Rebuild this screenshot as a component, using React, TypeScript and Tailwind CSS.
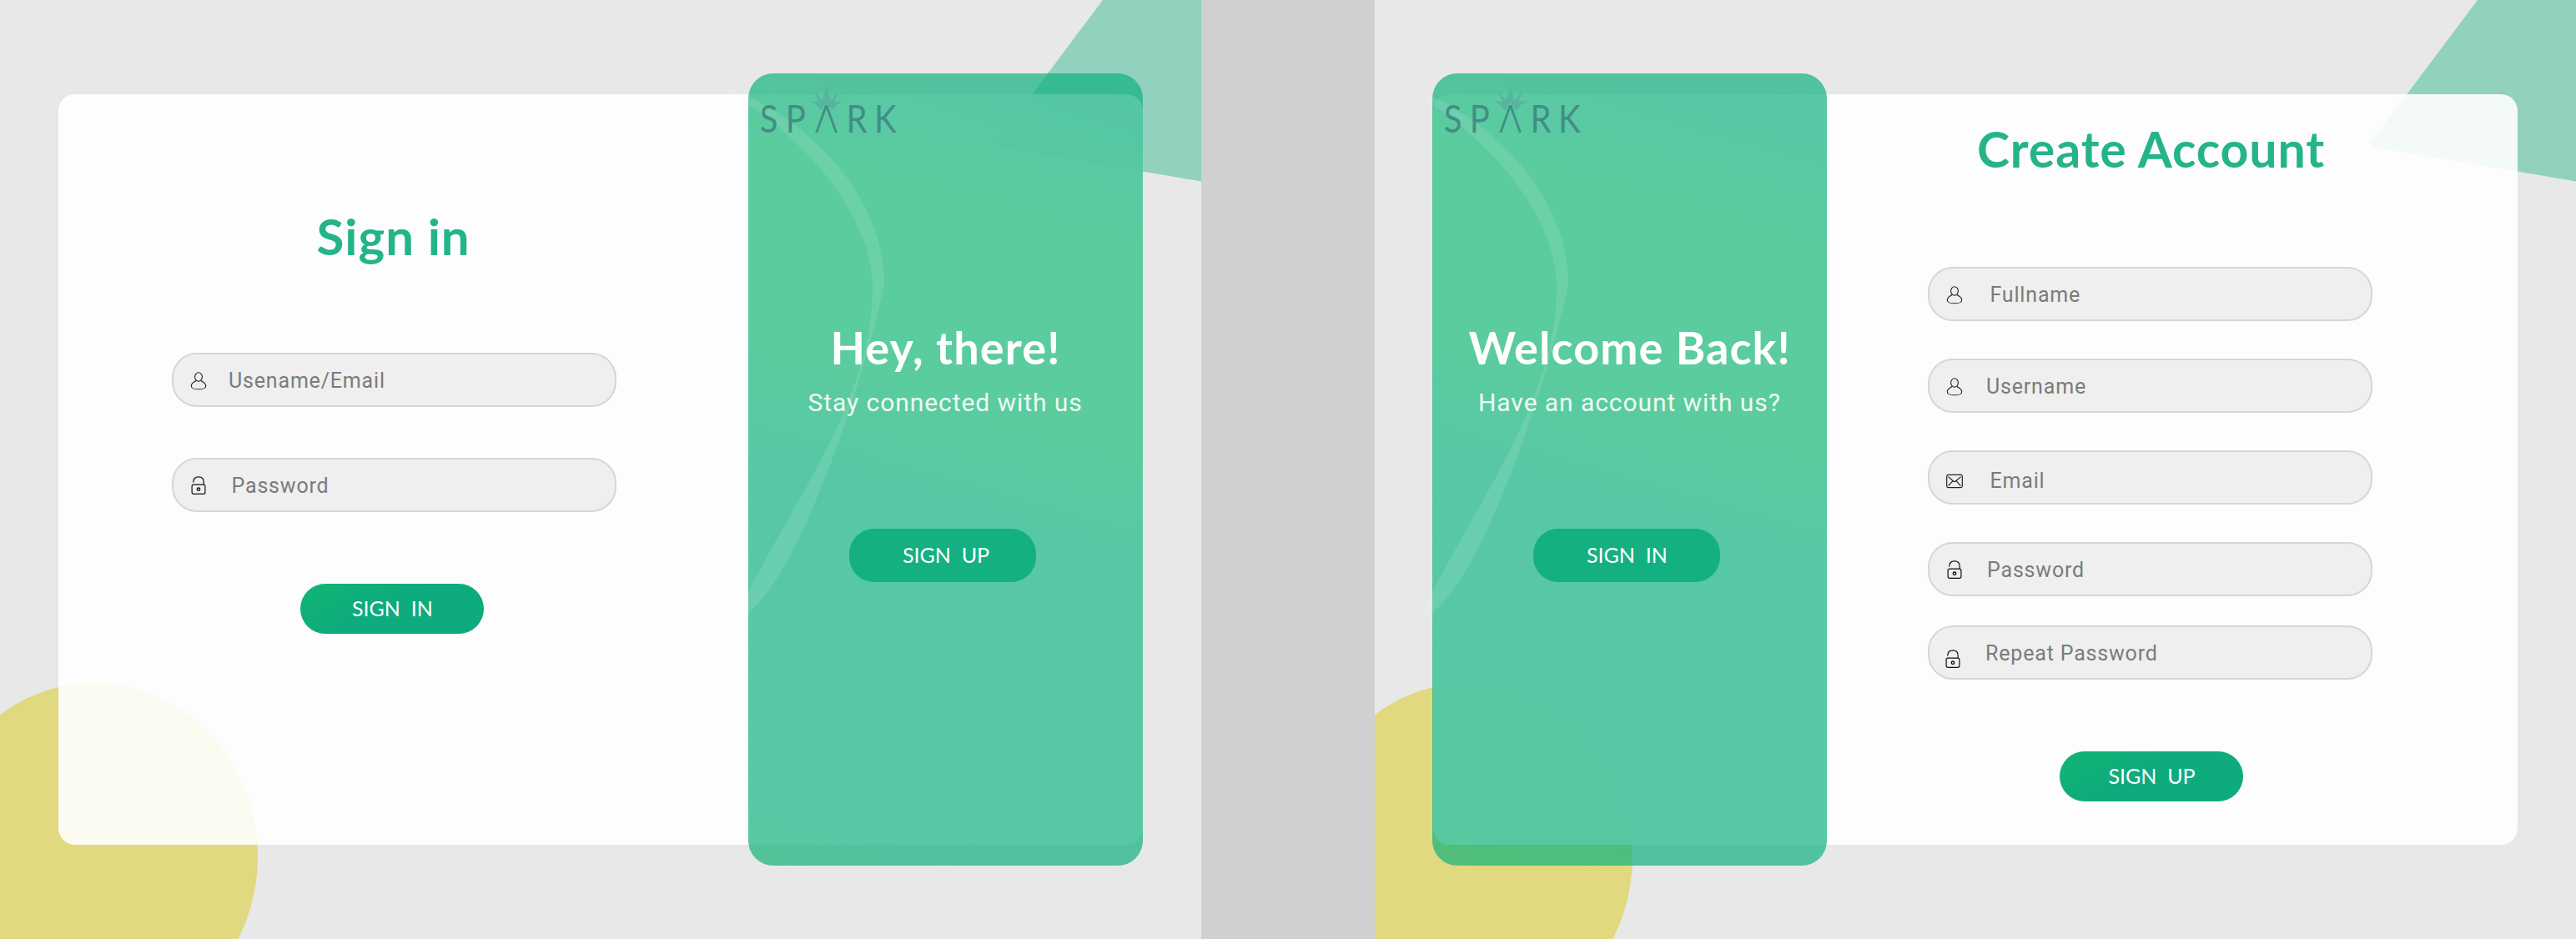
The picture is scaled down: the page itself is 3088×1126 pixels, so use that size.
import React from "react";

type IconName = "user" | "lock" | "mail";

function FieldIcon({ name }: { name: IconName }) {
  if (name === "user") {
    return (
      <svg width="20" height="22" viewBox="0 0 20 22" fill="none" stroke="#222" strokeWidth="1.1">
        <ellipse cx="10" cy="6" rx="4.4" ry="5.2" />
        <path d="M7.2 10.6 C4 12.2 1.3 13.6 1.3 16.6 C1.3 19.8 3.6 20.8 10 20.8 C16.4 20.8 18.7 19.8 18.7 16.6 C18.7 13.6 16 12.2 12.8 10.6" />
      </svg>
    );
  }
  if (name === "lock") {
    return (
      <svg width="20" height="22" viewBox="0 0 20 22" fill="none" stroke="#111" strokeWidth="1.2">
        <rect x="2.1" y="10.1" width="15.8" height="11.2" rx="2" />
        <path d="M3.7 7.4 C3.7 3.2 6.2 0.9 10 0.9 C13.8 0.9 16.2 3.2 16.2 7.2 V10" />
        <circle cx="10" cy="15.7" r="1.7" strokeWidth="1.4" />
      </svg>
    );
  }
  return (
    <svg width="20" height="22" viewBox="0 0 20 22" fill="none" stroke="#222" strokeWidth="1.2">
      <rect x="0.7" y="3.4" width="18.6" height="15.2" rx="1.8" />
      <path d="M2.4 5.6 L8.6 11 Q10 12.2 11.4 11 L17.6 5.6 M2.6 16.6 L7.8 10.8 M17.4 16.6 L12.2 10.8" />
    </svg>
  );
}

interface FieldProps {
  icon: IconName;
  label: string;
  className?: string;
  iconClass?: string;
  labelClass?: string;
}

function Field({ icon, label, className = "", iconClass = "", labelClass = "" }: FieldProps) {
  return (
    <div
      className={`flex h-[65px] w-[533px] items-center rounded-[30px] border-2 border-[#d6d6d6] bg-[#efefef] pl-5 ${className}`}
    >
      <span className={iconClass}>
        <FieldIcon name={icon} />
      </span>
      <span
        className={`font-[Roboto,sans-serif] text-[25px] leading-[30px] tracking-[0.82px] text-[#7b7b7b] ${labelClass}`}
      >
        {label}
      </span>
    </div>
  );
}

function SubmitButton({ children, className = "" }: { children: string; className?: string }) {
  return (
    <button
      className={`flex h-[60px] w-[220px] items-center whitespace-pre rounded-[30px] bg-[linear-gradient(150deg,#12b572_0%,#0dab7d_45%,#0dab7d_100%)] font-[Lato,sans-serif] text-[25px] text-white ${className}`}
    >
      {children}
    </button>
  );
}

function SparkLogo() {
  return (
    <svg className="absolute left-0 top-0" width="200" height="90" viewBox="0 0 200 90" role="img" fill="#438d87">
      <path
        d="M93.7 16 L98.9 32.5 L108.7 21 L103 34.5 L113.7 32.7 L107.5 36.6 L100.5 44 L93.7 35.5 L87 44 L80 36.6 L74.4 32.7 L84.6 34.5 L78.7 21 L88.6 32.5 Z"
        fill="#58b39f"
      />
      <text
        transform="scale(0.88 1)"
        x="15.5 51"
        y="71.3"
        fontFamily="Lato, sans-serif"
        fontSize="45.5"
      >
        SP
      </text>
      <text x="93.7" y="71.3" textAnchor="middle" fontFamily="Roboto, sans-serif" fontWeight="300" fontSize="46">
        Λ
      </text>
      <text
        transform="scale(0.88 1)"
        x="133.5 171.5"
        y="71.3"
        fontFamily="Lato, sans-serif"
        fontSize="45.5"
      >
        RK
      </text>
    </svg>
  );
}

function Swoosh() {
  return (
    <svg
      className="absolute left-0 top-0 overflow-visible"
      width="473"
      height="950"
      viewBox="0 0 473 950"
      fill="white"
      fillOpacity="0.11"
    >
      <path d="M-27 17 C64 48 163 142 163 253 C145 345 60 620 -10 653 Q-14 654 -11 646 C40 530 149 400 149 257 C149 175 75 80 -27 20 Z" />
    </svg>
  );
}

interface PanelProps {
  title: string;
  titleClass: string;
  subtitle: string;
  subtitleClass: string;
  action: string;
  className?: string;
}

function GreenPanel({ title, titleClass, subtitle, subtitleClass, action, className = "" }: PanelProps) {
  return (
    <section
      className={`relative -my-[25px] flex w-[473px] shrink-0 flex-col items-start rounded-[30px] bg-[linear-gradient(196deg,rgba(17,177,129,0.7)_0%,rgba(17,177,129,0.7)_6%,rgba(21,183,117,0.7)_20%,rgba(21,183,117,0.7)_42%,rgba(17,177,129,0.7)_55%,rgba(17,177,129,0.7)_93%,rgba(19,180,118,0.7)_100%)] ${className}`}
    >
      <Swoosh />
      <SparkLogo />
      <h2
        className={`relative mt-[302px] whitespace-nowrap font-[Lato,sans-serif] text-[54px] font-bold leading-[54px] text-white ${titleClass}`}
      >
        {title}
      </h2>
      <p
        className={`relative mt-[24px] whitespace-nowrap font-[Roboto,sans-serif] text-[30px] leading-[30px] tracking-[0.93px] text-white/90 ${subtitleClass}`}
      >
        {subtitle}
      </p>
      <button className="relative ml-[121px] mt-[135.5px] flex h-16 w-[224px] items-center whitespace-pre rounded-[30px] bg-[#14b081] pl-[64px] font-[Lato,sans-serif] text-[25px] text-white">
        {action}
      </button>
    </section>
  );
}

function Backdrop() {
  return (
    <svg className="absolute inset-0" width="1440" height="1126" viewBox="0 0 1440 1126">
      <path d="M1322 0 L1196 168 Q1191 175 1198 176.5 L1440 217.5 V0 Z" fill="#91d1bd" />
      <ellipse cx="113" cy="1027" rx="196" ry="208" fill="#e1d97f" />
    </svg>
  );
}

export default function App() {
  return (
    <div className="flex h-[1126px] w-[3088px] justify-between overflow-hidden bg-[#d0d0d0]">
      <main className="relative w-[1440px] overflow-hidden bg-[#e8e8e8] pl-[70px] pt-[113px]">
        <Backdrop />
        <div className="relative flex h-[900px] w-[1300px] rounded-[20px] bg-white/90">
          <form className="flex w-[827px] flex-col items-start">
            <h1 className="ml-[309.5px] mt-[140px] font-[Lato,sans-serif] text-[60px] font-bold leading-[60px] tracking-[1px] text-[#25b48a]">
              Sign in
            </h1>
            <Field
              icon="user"
              label="Usename/Email"
              className="ml-[136px] mt-[110px]"
              iconClass="mt-[3px]"
              labelClass="ml-[26px] mt-[2px]"
            />
            <Field
              icon="lock"
              label="Password"
              className="ml-[136px] mt-[61px]"
              labelClass="ml-[29.5px] mt-[2px]"
            />
            <SubmitButton className="ml-[290px] mt-[86px] pl-[62px]">{"SIGN  IN"}</SubmitButton>
          </form>
          <GreenPanel
            title="Hey, there!"
            titleClass="ml-[98.5px] tracking-[1.1px]"
            subtitle="Stay connected with us"
            subtitleClass="ml-[71.5px]"
            action={"SIGN  UP"}
          />
        </div>
      </main>

      <main className="relative w-[1440px] overflow-hidden bg-[#e8e8e8] pl-[70px] pt-[113px]">
        <Backdrop />
        <div className="relative flex h-[900px] w-[1300px] rounded-[20px] bg-white/90">
          <GreenPanel
            title="Welcome Back!"
            titleClass="ml-[43.5px] tracking-[1.1px]"
            subtitle="Have an account with us?"
            subtitleClass="ml-[55px]"
            action={"SIGN  IN"}
            className="-ml-px"
          />
          <form className="flex flex-1 flex-col items-start">
            <h1 className="ml-[180px] mt-[36px] whitespace-nowrap font-[Lato,sans-serif] text-[59px] font-bold leading-[60px] tracking-[0.88px] text-[#25b48a]">
              Create Account
            </h1>
            <Field
              icon="user"
              label="Fullname"
              className="ml-[121px] mt-[111px]"
              iconClass="mt-[3px]"
              labelClass="ml-[32.5px] mt-[2px]"
            />
            <Field
              icon="user"
              label="Username"
              className="ml-[121px] mt-[45px]"
              iconClass="mt-[3px]"
              labelClass="ml-[28px] mt-[2px]"
            />
            <Field
              icon="mail"
              label="Email"
              className="ml-[121px] mt-[45px]"
              iconClass="mt-[9px]"
              labelClass="ml-[32.5px] mt-[8px]"
            />
            <Field
              icon="lock"
              label="Password"
              className="ml-[121px] mt-[45px]"
              labelClass="ml-[29px] mt-[2px]"
            />
            <Field
              icon="lock"
              label="Repeat Password"
              className="ml-[121px] mt-[35px]"
              iconClass="mt-[14px] -ml-[2px]"
              labelClass="ml-[29px] mt-[2px]"
            />
            <SubmitButton className="ml-[279px] mt-[86px] pl-[58.5px]">{"SIGN  UP"}</SubmitButton>
          </form>
        </div>
      </main>
    </div>
  );
}
